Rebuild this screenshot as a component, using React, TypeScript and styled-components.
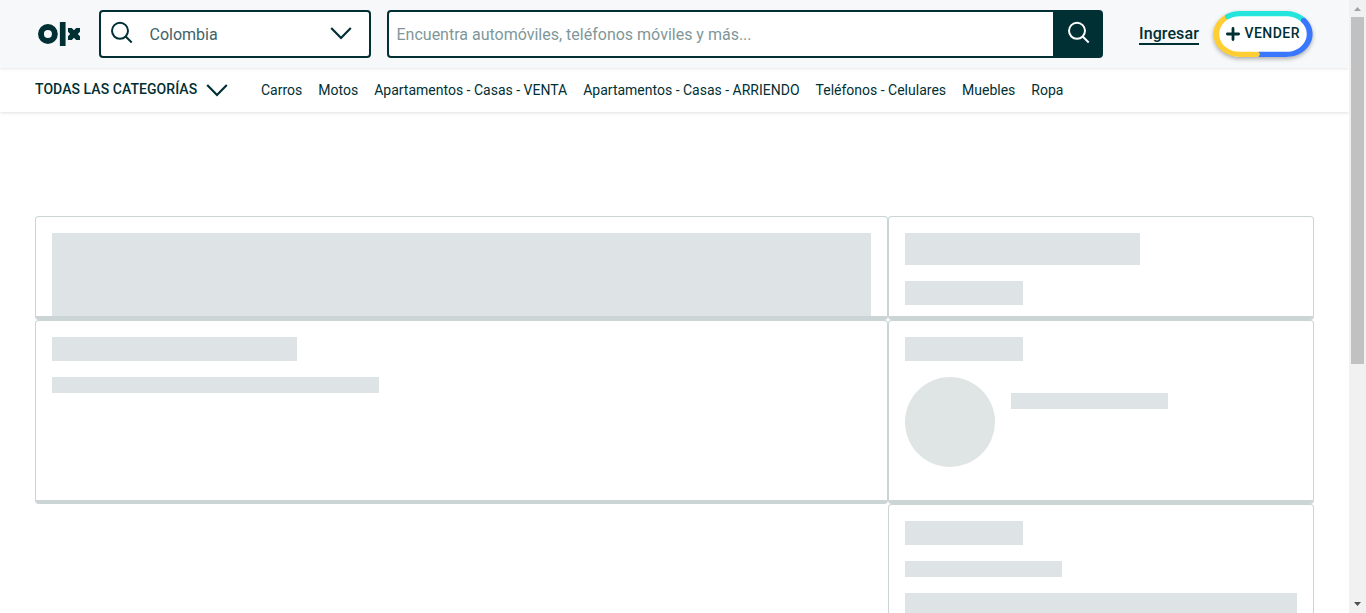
import React from "react";
import styled, { createGlobalStyle } from "styled-components";

const INK = "#002f34";
const LINE = "#cbd5d6";

const GlobalStyle = createGlobalStyle`
  *, *::before, *::after { box-sizing: border-box; }
  html, body { margin: 0; height: 100%; overflow: hidden; }
  body { background: #fff; color: ${INK}; font-family: Roboto, Arial, sans-serif; font-size: 14px; }
`;

const Window = styled.div`
  display: flex;
  height: 613px;
  overflow: hidden;
`;

const Page = styled.div`
  flex: 1;
  min-width: 0;
  overflow: hidden;
`;

const Header = styled.header`
  position: relative;
  z-index: 2;
  display: flex;
  align-items: flex-start;
  height: 68px;
  padding: 10px 36px 0 38px;
  background: #f7f8fa;
  box-shadow: 0 1px 3px rgba(0, 0, 0, 0.1);
`;

const Logo = styled.svg`
  flex: none;
  width: 42px;
  height: 24px;
  margin: 12px 19px 0 0;
  fill: ${INK};
`;

const LocationBox = styled.div`
  display: flex;
  align-items: center;
  width: 272px;
  height: 48px;
  padding: 0 16px 0 9px;
  border: 2px solid ${INK};
  border-radius: 4px;
  background: #fff;
  font-size: 16px;
  svg { margin-bottom: 2px; }
`;

const LocationText = styled.span`
  flex: 1;
  padding-left: 15.5px;
  color: #406367;
`;

const SearchForm = styled.div`
  display: flex;
  width: 716px;
  height: 48px;
  margin-left: 16px;
  border: 2px solid ${INK};
  border-radius: 4px;
  background: #fff;
`;

const SearchField = styled.div`
  flex: 1;
  padding: 1px 0 0 7.5px;
  line-height: 44px;
  font-size: 16px;
  color: #7f9799;
`;

const SearchButton = styled.div`
  display: flex;
  justify-content: center;
  width: 48px;
  padding: 9px 0 0 4px;
  background: ${INK};
`;

const Login = styled.a`
  margin: 14px 0 0 36px;
  width: 60px;
  height: 21px;
  border-bottom: 2px solid ${INK};
  font-size: 16px;
  font-weight: 500;
  line-height: 19px;
  letter-spacing: 0.1px;
`;

const SellButton = styled.div`
  position: relative;
  width: 100px;
  height: 48px;
  margin-left: auto;
`;

const SellRing = styled.svg`
  display: block;
  width: 100px;
  height: 48px;
  overflow: visible;
  filter: drop-shadow(0 2px 2px rgba(0, 0, 0, 0.3));
`;

const SellLabel = styled.span`
  position: absolute;
  inset: 0;
  display: flex;
  align-items: center;
  gap: 4.5px;
  padding: 0 0 2px 13px;
  font-weight: 500;
  letter-spacing: 0.45px;
  svg { position: relative; top: 1px; }
`;

const Nav = styled.nav`
  display: flex;
  align-items: center;
  height: 44px;
  padding-left: 35px;
  box-shadow: 0 1px 3px rgba(0, 0, 0, 0.12);
`;

const AllCategories = styled.div`
  display: flex;
  align-items: center;
  justify-content: space-between;
  width: 194px;
  margin-right: 32px;
  padding-bottom: 2px;
  font-weight: 500;
  letter-spacing: 0.06px;
  white-space: nowrap;
  svg { position: relative; top: 1px; }
`;

const Links = styled.div`
  display: flex;
  gap: 16px;
  padding-bottom: 1px;
`;

const Icon = styled.svg<{ $color?: string }>`
  flex: none;
  fill: none;
  stroke: ${(p) => p.$color ?? INK};
`;

const Columns = styled.main`
  display: grid;
  grid-template-columns: 853px 426px;
  align-items: start;
  margin: 104px 0 0 35px;
`;

const Card = styled.section<{ $height: number }>`
  display: flex;
  flex-direction: column;
  gap: 16px;
  height: ${(p) => p.$height}px;
  padding: 16px 16px 0;
  border: 1px solid ${LINE};
  border-bottom-width: 4px;
  border-radius: 4px;
  overflow: hidden;
`;

const Bar = styled.div<{ $width: string; $height: number }>`
  flex: none;
  width: ${(p) => p.$width};
  height: ${(p) => p.$height}px;
  background: #dee4e6;
`;

const Profile = styled.div`
  display: flex;
  gap: 16px;
  ${Bar} { margin-top: 16px; }
`;

const Avatar = styled.div`
  width: 90px;
  height: 90px;
  border-radius: 50%;
  background: #dfe5e4;
`;

const ScrollTrack = styled.div`
  display: flex;
  flex-direction: column;
  align-items: center;
  width: 17px;
  background: #f1f1f1;
`;

const ScrollThumb = styled.div`
  width: 13px;
  height: 347px;
  margin-bottom: auto;
  background: #c1c1c1;
`;

const SearchIcon = ({ color }: { color?: string }) => (
  <Icon $color={color} width="24" height="24" viewBox="0 0 24 24" strokeWidth="2">
    <circle cx="10" cy="9.800" r="8" />
    <path d="M15.7 15.5 21.700 21.500" />
  </Icon>
);

const Chevron = () => (
  <Icon width="24" height="24" viewBox="0 0 24 24" strokeWidth="2.2">
    <path d="M2.2 7 12 17 21.8 7" />
  </Icon>
);

const links = [
  "Carros",
  "Motos",
  "Apartamentos - Casas - VENTA",
  "Apartamentos - Casas - ARRIENDO",
  "Teléfonos - Celulares",
  "Muebles",
  "Ropa",
];

export default function App() {
  return (
    <Window>
      <GlobalStyle />
      <Page>
        <Header>
          <Logo viewBox="0 0 36.289 20.768">
            <path d="M18.9 20.77V0h4.93v20.77zM0 10.39a8.56 8.56 0 1 1 8.56 8.56A8.56 8.56 0 0 1 0 10.4zm5.1-.01a3.46 3.46 0 1 0 3.46-3.46 3.46 3.46 0 0 0-3.46 3.46zm27.87 5.2l-1.88-1.87-1.87 1.88H25.9V12.3l1.9-1.9-1.9-1.89V5.18h3.27l1.92 1.92 1.93-1.92h3.27v3.33l-1.9 1.9 1.9 1.9v3.27z" />
          </Logo>
          <LocationBox>
            <SearchIcon />
            <LocationText>Colombia</LocationText>
            <Chevron />
          </LocationBox>
          <SearchForm>
            <SearchField>Encuentra automóviles, teléfonos móviles y más...</SearchField>
            <SearchButton>
              <SearchIcon color="#fff" />
            </SearchButton>
          </SearchForm>
          <Login>Ingresar</Login>
          <SellButton>
            <SellRing viewBox="0 0 1603 768">
              <path fill="#fff" d="M434.4 16.9h718.9c202.7 0 367 164.4 367 367.1s-164.300 367.1-367 367.1h-718.900c-202.700 0-367-164.400-367-367.100s164.300-367.100 367-367.100z" />
              <path fill="#ffce32" d="M427.241 669.489c-80.917 0-158.59-25.926-218.705-73.004l-0.016-0.014c-69.113-54.119-108.754-131.557-108.754-212.474 0-41.070 9.776-80.712 29.081-117.797 25.058-48.139 64.933-89.278 115.333-118.966l-52.379-67.581c-64.73 38.122-115.955 90.98-148.159 152.845-24.842 47.745-37.441 98.726-37.441 151.499 0 104.027 50.962 203.61 139.799 273.175h0.016c77.312 60.535 177.193 93.887 281.22 93.887h299.699l25.138-40.783-25.138-40.783h-298.845z" />
              <path fill="#23e5db" d="M1318.522 38.596c-45.72-14.369-93.752-21.658-142.762-21.658h-748.511c-84.346 0-165.764 21.683-235.441 62.713l3.118 51.726 49.245 15.854c54.16-31.895 117.452-48.739 183.073-48.739h748.511c38.159 0 75.52 5.657 111.029 16.829 44.91 14.111 86.594 37.205 120.526 66.792l66.163-57.68c-43.616-38.010-97.197-67.703-154.957-85.852z" />
              <path fill="#3a77ff" d="M1473.479 124.453l-55.855 9.91-10.307 47.76c61.844 53.929 95.92 125.617 95.92 201.88 0 25.235-3.772 50.26-11.214 74.363-38.348 124.311-168.398 211.129-316.262 211.129h-448.812l25.121 40.783-25.121 40.783h448.812c190.107 0 357.303-111.638 406.613-271.498 9.572-31.009 14.423-63.162 14.423-95.559 0-98.044-43.805-190.216-123.317-259.551z" />
            </SellRing>
            <SellLabel>
              <Icon width="14" height="14" viewBox="0 0 14 14" strokeWidth="2.8" strokeLinecap="round">
                <path d="M7 1.400v11.200M1.400 7h11.200" />
              </Icon>
              VENDER
            </SellLabel>
          </SellButton>
        </Header>
        <Nav>
          <AllCategories>
            TODAS LAS CATEGORÍAS
            <Chevron />
          </AllCategories>
          <Links>
            {links.map((label) => (
              <span key={label}>{label}</span>
            ))}
          </Links>
        </Nav>
        <Columns>
          <div>
            <Card $height={104}>
              <Bar $width="819px" $height={400} />
            </Card>
            <Card $height={184}>
              <Bar $width="245px" $height={24} />
              <Bar $width="327px" $height={16} />
            </Card>
          </div>
          <div>
            <Card $height={104}>
              <Bar $width="235px" $height={32} />
              <Bar $width="118px" $height={24} />
            </Card>
            <Card $height={184}>
              <Bar $width="118px" $height={24} />
              <Profile>
                <Avatar />
                <Bar $width="157px" $height={16} />
              </Profile>
            </Card>
            <Card $height={184}>
              <Bar $width="118px" $height={24} />
              <Bar $width="157px" $height={16} />
              <Bar $width="392px" $height={90} />
            </Card>
          </div>
        </Columns>
      </Page>
      <ScrollTrack>
        <svg width="17" height="17" viewBox="0 0 17 17" fill="#a3a3a3">
          <path d="M5 11h7L8.500 7z" />
        </svg>
        <ScrollThumb />
        <svg width="17" height="17" viewBox="0 0 17 17" fill="#505050">
          <path d="M5 6h7l-3.500 4z" />
        </svg>
      </ScrollTrack>
    </Window>
  );
}
